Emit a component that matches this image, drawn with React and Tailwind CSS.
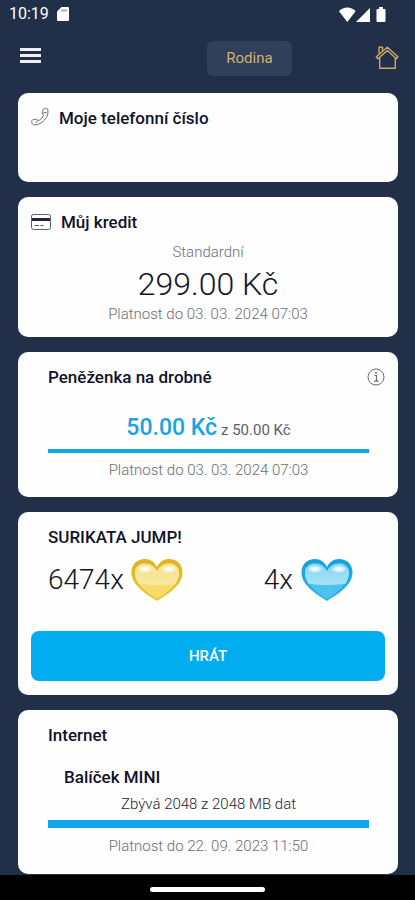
import React from 'react'

const wallet = { left: 50, total: 50 }
const data = { left: 2048, total: 2048 }

function StatusBar() {
  return (
    <div className="flex h-7 items-center justify-between pl-[9px] pr-7 text-white">
      <div className="flex items-center gap-2">
        <span className="text-base leading-5">10:19</span>
        <svg className="h-[14px] w-3" viewBox="0 0 12 14" aria-hidden="true">
          <path d="M4.5 0H11a1 1 0 0 1 1 1v12a1 1 0 0 1-1 1H1a1 1 0 0 1-1-1V4.5z" fill="#fff" />
          <path d="M5 2.5h5v2H3.5z" fill="#a9adb5" />
        </svg>
      </div>
      <svg className="h-[15px] w-12" viewBox="0 0 48 15" fill="#fff" aria-hidden="true">
        <path d="M0 4.2C4.6-.7 12-.7 16.6 4.2L8.3 15z" />
        <path d="M31 1v14H17z" />
        <path d="M40 0h4v2h1.5a1 1 0 0 1 1 1v11a1 1 0 0 1-1 1h-7a1 1 0 0 1-1-1V3a1 1 0 0 1 1-1H40z" />
      </svg>
    </div>
  )
}

function TopBar() {
  return (
    <header className="grid h-[65px] grid-cols-[1fr_auto_1fr] items-start pl-5 pr-4">
      <button type="button" aria-label="Menu" className="mt-5 flex w-[21px] flex-col gap-[3px]">
        <span className="h-[3px] w-full bg-[#f1efec]" />
        <span className="h-[3px] w-full bg-[#f1efec]" />
        <span className="h-[3px] w-full bg-[#f1efec]" />
      </button>
      <button type="button" className="ml-20 mt-[13px] h-[35px] w-[85px] rounded-md bg-[#303f5a] text-[15px] text-[#d2b06c]">
        Rodina
      </button>
      <button type="button" aria-label="Domů" className="mt-[17px] justify-self-end">
        <svg className="h-[25px] w-6" viewBox="0 0 24 25" fill="none" stroke="#c9a968" strokeWidth="1.4" strokeLinejoin="round">
          <path d="M12.3 2.2 1.3 11.8l1.5 2 9.5-8.2 9 8.2 1.6-2z" />
          <path d="M4.7 12.5v10.8h15.6V12.5" />
          <path d="M4 8.8V2.2h3.5V6" />
        </svg>
      </button>
    </header>
  )
}

function Card({ children, className = '' }) {
  return <section className={'rounded-[10px] bg-[#fefefe] pt-[13px] ' + className}>{children}</section>
}

function CardTitle({ children, className = '' }) {
  return <h2 className={'text-[17px] font-medium leading-6 text-[#12132b] ' + className}>{children}</h2>
}

function Validity({ children }) {
  return <p className="text-center text-[15px] font-light leading-5 text-[#6b6d75]">{children}</p>
}

function Bar({ value, label, className }) {
  return (
    <div role="progressbar" aria-label={label} aria-valuenow={value} className={'bg-[#d9eef9] ' + className}>
      <div className="h-full bg-[#0fa7e9]" style={{ width: value + '%' }} />
    </div>
  )
}

function Heart({ id, rim, rimDark, body, mid, shine }) {
  return (
    <svg className="h-11 w-[52px]" viewBox="0 0 52 44" aria-hidden="true">
      <defs>
        <linearGradient id={id + '-rim'} x1="0" y1="0" x2="0" y2="1">
          <stop offset="0" stopColor={rimDark} />
          <stop offset="1" stopColor={rim} />
        </linearGradient>
        <linearGradient id={id + '-mid'} x1="0" y1="0" x2="0" y2="1">
          <stop offset="0" stopColor={shine} />
          <stop offset="1" stopColor={mid} />
        </linearGradient>
        <clipPath id={id + '-clip'}>
          <path d="M26 41C17 35 4 27 4 15 4 8 9 5.5 14 5.5c6 0 9.5 3 12 7.5 2.5-4.5 6-7.5 12-7.500 5 0 10 2.500 10 9.500 0 12-13 20-22 26z" />
        </clipPath>
        <radialGradient id={id + '-glow'}>
          <stop offset="0" stopColor="#fff" />
          <stop offset="0.5" stopColor="#fff" stopOpacity="0.7" />
          <stop offset="1" stopColor="#fff" stopOpacity="0" />
        </radialGradient>
      </defs>
      <path d="M26 43C17 37 .5 28 .5 14.5.5 6 6.5 1 14 1c5.5 0 9.5 3 12 8 2.5-5 6.5-8 12-8 7.5 0 13.5 5 13.5 13.5C51.5 28 35 37 26 43z" fill={'url(#' + id + '-rim)'} />
      <g clipPath={'url(#' + id + '-clip)'}>
        <path d="M0 0h52v44H0z" fill={body} />
        <path d="M0 0h52v24c-14 4-38 4-52 0z" fill={'url(#' + id + '-mid)'} />
      </g>
      <ellipse cx="14" cy="11" rx="8" ry="4" fill={'url(#' + id + '-glow)'} />
      <ellipse cx="38" cy="11" rx="8" ry="4" fill={'url(#' + id + '-glow)'} />
    </svg>
  )
}

export default function App() {
  return (
    <div className="flex min-h-screen flex-col bg-[#222f49] font-['Roboto',sans-serif]">
      <StatusBar />
      <TopBar />

      <main className="flex flex-col gap-[15px] pl-[18px] pr-[17px]">
        {/* Phone number */}
        <Card className="flex items-start gap-[10px] pb-[52px] pl-[13px]">
          <svg className="mt-[2px] h-[18px] w-[18px]" viewBox="0 0 18 18" fill="none" stroke="#6e707c" strokeWidth="1" strokeLinejoin="round" aria-hidden="true">
            <path d="M12 1.5c1.5-1.2 3.5-1.3 4.8-.4.7 4.2-.4 8-3.3 10.9-2.8 3-6 4.8-9.8 5C1.8 16.8.6 15.5.7 13.3c.1-1 .8-1.7 1.8-1.8l3-.2c.8 0 1.2.6 1.5 1.5 2.5-1 4.500-3 5.600-5.600-1-.4-1.400-1-1.400-1.700z" />
            <path d="m11.600 5.300 4.300-1M6.600 12.500l-1.600 2.800" />
          </svg>
          <CardTitle>Moje telefonní číslo</CardTitle>
        </Card>

        {/* Credit */}
        <Card className="pb-[13px]">
          <div className="flex items-center gap-[10px] pl-[13px]">
            <svg className="h-4 w-5" viewBox="0 0 20 16" fill="none" stroke="#5b5e6b" aria-hidden="true">
              <rect x=".5" y=".5" width="19" height="15" rx="2" />
              <path d="M1 5.5h18" stroke="#23263a" strokeWidth="3" />
              <path d="M3.5 11.5H8M9.5 11.5h3" />
            </svg>
            <CardTitle>Můj kredit</CardTitle>
          </div>
          <p className="mt-2 text-center text-[15px] font-light leading-5 text-[#6b6d75]">Standardní</p>
          <p className="mt-[2px] text-center text-[32px] font-light leading-10 text-[#14161f]">299.00 Kč</p>
          <Validity>Platnost do 03. 03. 2024 07:03</Validity>
        </Card>

        {/* Small change wallet */}
        <Card className="pb-[17px] pl-[30px] pr-[13px]">
          <div className="flex items-center justify-between">
            <CardTitle>Peněženka na drobné</CardTitle>
            <button type="button" aria-label="Informace">
              <svg className="h-[18px] w-[18px]" viewBox="0 0 18 18" fill="none" stroke="#6c6e76">
                <circle cx="9" cy="9" r="8" />
                <path d="M7.5 7.5h2V13M7 13.2h4.5M8 4.8h2" strokeWidth="1.2" />
              </svg>
            </button>
          </div>
          <div className="pr-4">
            <p className="mt-[23px] flex h-8 items-baseline justify-center gap-1 leading-8">
              <span className="text-[23px] font-medium text-[#1ba4e3]">50.00 Kč</span>
              <span className="text-[15px] text-[#5c5e63]">z 50.00 Kč</span>
            </p>
            <Bar value={(wallet.left / wallet.total) * 100} label="Peněženka na drobné" className="mb-[7px] mt-[5px] h-1" />
            <Validity>Platnost do 03. 03. 2024 07:03</Validity>
          </div>
        </Card>

        {/* Game */}
        <Card className="px-[13px] pb-[14px]">
          <CardTitle className="pl-[17px]">SURIKATA JUMP!</CardTitle>
          <div className="mt-2 flex items-center justify-between pl-[17px] pr-8 text-[28px] font-light leading-[46px] text-[#14161f]">
            <div className="flex items-center gap-[7px]">
              <span>6474x</span>
              <Heart id="gold" rim="#e9c63a" rimDark="#deb31c" body="#f6dc6c" mid="#f9e89f" shine="#f5e08a" />
            </div>
            <div className="flex items-center gap-2">
              <span>4x</span>
              <Heart id="blue" rim="#2fb4e6" rimDark="#159fdc" body="#4bc3ee" mid="#a6e2f6" shine="#7fd3f1" />
            </div>
          </div>
          <button type="button" className="mt-7 h-[50px] w-full rounded-lg bg-[#00adee] text-[15px] font-medium text-white">
            HRÁT
          </button>
        </Card>

        {/* Internet */}
        <Card className="pb-[18px] pl-[30px] pr-[29px]">
          <CardTitle>Internet</CardTitle>
          <h3 className="mt-[18px] pl-4 text-[17px] font-medium leading-6 text-[#12132b]">Balíček MINI</h3>
          <p className="mt-[5px] text-center text-[15px] font-light leading-5 text-[#23252e]">Zbývá 2048 z 2048 MB dat</p>
          <Bar value={(data.left / data.total) * 100} label="Balíček MINI" className="mb-2 mt-[6px] h-2" />
          <Validity>Platnost do 22. 09. 2023 11:50</Validity>
        </Card>
      </main>

      <footer className="mt-px flex grow items-center justify-center bg-black pt-1">
        <div className="my-2 h-[5px] w-[115px] rounded-full bg-white" />
      </footer>
    </div>
  )
}
